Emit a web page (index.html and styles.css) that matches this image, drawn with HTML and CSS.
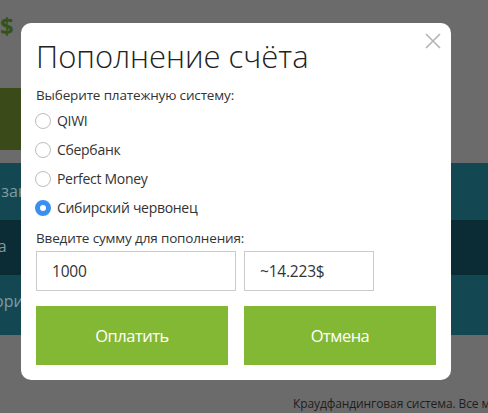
FILE: index.html
```html
<!DOCTYPE html>
<html lang="ru">
<head>
  <meta charset="UTF-8" />
  <meta name="viewport" content="width=device-width, initial-scale=1.0"/>
  <title>Пополнение счёта</title>
  <link rel="stylesheet" href="styles.css">
</head>
<body>

  <div class="page">
    <div class="balance">$</div>
    <div class="topup"></div>
    <div class="menu">
      <div class="menu-item menu-orders">Мои заказы</div>
      <div class="menu-item menu-stats dark">Статистика</div>
      <div class="menu-item menu-cats">Категории</div>
    </div>
    <div class="footer">Краудфандинговая система. Все материалы защищены</div>
  </div>

  <div class="modal">
    <button class="close" aria-label="Закрыть">
      <svg width="16" height="16" viewBox="0 0 16 16"><path d="M1 1 L15 15 M15 1 L1 15" stroke="#b3b3b3" stroke-width="1.6" fill="none"/></svg>
    </button>
    <h1>Пополнение счёта</h1>

    <div class="label">Выберите платежную систему:</div>
    <label class="option"><input type="radio" name="pay" /> QIWI</label>
    <label class="option"><input type="radio" name="pay" /> Сбербанк</label>
    <label class="option"><input type="radio" name="pay" /> Perfect Money</label>
    <label class="option"><input type="radio" name="pay" checked /> Сибирский червонец</label>

    <div class="label sum-label">Введите сумму для пополнения:</div>
    <div class="sum-row">
      <input class="sum" value="1000" />
      <input class="converted" value="~14.223$" readonly />
    </div>

    <div class="actions">
      <button class="btn">Оплатить</button>
      <button class="btn">Отмена</button>
    </div>
  </div>

</body>
</html>
```

FILE: styles.css
```css
body { margin: 0; font-family: "Open Sans", "Noto Sans", sans-serif; background: #6b6b6b; overflow: hidden; }

.page { height: 413px; }
.balance { height: 88px; padding-top: 12px; box-sizing: border-box; font-size: 24px; font-weight: bold; color: #33531a; line-height: 28px; }
.topup { width: 300px; height: 62px; background: #3a4a18; margin-bottom: 13px; }
.menu-item { height: 57px; line-height: 57px; background: #134852; color: #7d9da3; font-size: 16px; white-space: nowrap; }
.menu-item.dark { height: 55px; line-height: 52px; background: #0c2c35; }
.menu-cats { height: 60px; line-height: 52px; }
.menu-orders { text-indent: -37px; }
.menu-stats { text-indent: -80px; }
.menu-cats { text-indent: -48px; }
.footer { margin-top: 60px; padding-left: 293px; font-size: 12px; letter-spacing: -0.1px; color: #1e1e1e; white-space: nowrap; }

.modal { position: absolute; left: 21px; top: 23px; width: 430px; height: 357px; box-sizing: border-box; padding: 15px 15px; background: #fff; border-radius: 10px; color: #333; }
.close { position: absolute; right: 10px; top: 10px; border: none; background: none; padding: 0; width: 16px; height: 16px; }
.close svg { display: block; }
h1 { margin: 0 0 12px 0; font-size: 31px; font-weight: 300; color: #222; line-height: 36px; }

.label { font-size: 13.5px; letter-spacing: -0.15px; line-height: 18px; margin-bottom: 2px; }
.option { display: flex; align-items: center; height: 29px; font-size: 14px; letter-spacing: -0.3px; color: #333; }
.option input { appearance: none; margin: 0 6px 0 -1px; width: 16px; height: 16px; border: 1.3px solid #bdbdbd; border-radius: 50%; background: #fff; box-sizing: border-box; }
.option input:checked { border: 5.5px solid #3a8ff2; background: #fff; }
.sum-label { margin-top: 7px; margin-bottom: 4px; }

.sum-row { display: flex; gap: 8px; }
.sum-row input { height: 40px; box-sizing: border-box; border: 1px solid #cbcbcb; padding: 0 15px; font-family: inherit; font-size: 15.5px; letter-spacing: -0.2px; color: #333; outline: none; }
.sum { width: 200px; }
.converted { width: 130px; padding-left: 14px; }

.actions { display: flex; gap: 16px; margin-top: 15px; }
.btn { width: 192px; height: 59px; border: none; background: #83b834; color: #fff; font-family: inherit; font-size: 16.5px; letter-spacing: -0.5px; }
```
